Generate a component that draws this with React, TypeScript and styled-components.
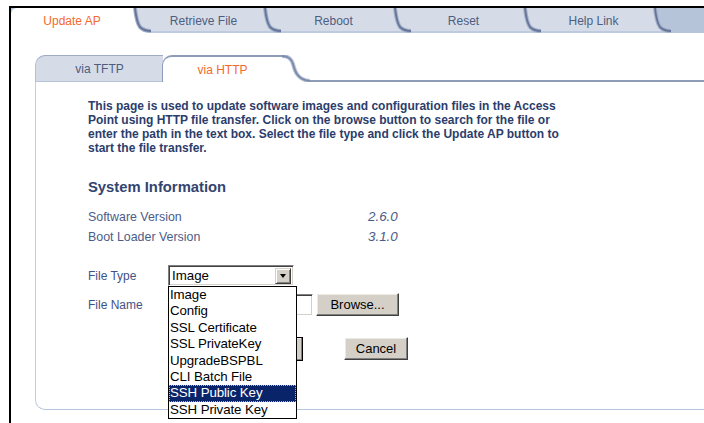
import React from "react";
import styled, { createGlobalStyle } from "styled-components";

const GlobalStyle = createGlobalStyle`
  html, body { margin: 0; padding: 0; background: #fff; }
  body { font-family: "Liberation Sans", Arial, sans-serif; }
`;

const Frame = styled.div`
  margin: 6px 0 0 9px;
  height: 417px;
  box-sizing: border-box;
  border-top: 2px solid #000;
  border-left: 2px solid #000;
  overflow: hidden;
`;

/* ---------- top navigation ---------- */

const TabBar = styled.nav`
  display: flex;
  height: 25px;
  background: #b6c4da;
`;

const Tab = styled.div<{ $active?: boolean; $width: number }>`
  display: flex;
  flex: none;
  width: ${(p) => p.$width}px;
  background: ${(p) => (p.$active ? "#fff" : "#d5dce8")};
  box-shadow: ${(p) => (p.$active ? "none" : "inset 0 -2px 0 #bdcadf")};
  border-top-left-radius: ${(p) => (p.$active ? "6px" : "0")};
`;

const TabLabel = styled.span<{ $active?: boolean; $shift: number }>`
  flex: 1;
  display: flex;
  align-items: center;
  justify-content: center;
  padding-right: ${(p) => p.$shift}px;
  font-size: 12px;
  color: ${(p) => (p.$active ? "#f5692c" : "#4d5d80")};
`;

const CurveSvg = styled.svg`
  flex: none;
  display: block;
`;

const TabCurve = ({ next }: { next: string }) => (
  <CurveSvg width="18" height="25" viewBox="0 0 18 25">
    <path d="M2 0 C3 9 4 15 7 19 C10 22 13 23 18 23 L18 0 Z" fill={next} />
    <path
      d="M2 0 C3 9 4 15 7 19 C10 22 13 23 18 23"
      fill="none"
      stroke="#a3afc7"
      strokeWidth="4"
    />
    <path
      d="M2 0 C3 9 4 15 7 19 C10 22 13 23 18 23"
      fill="none"
      stroke="#65749a"
      strokeWidth="1.8"
    />
  </CurveSvg>
);

/* ---------- sub navigation + panel ---------- */

const Body = styled.div`
  padding: 22px 0 0 24px;
`;

const SubTabs = styled.div`
  display: flex;
  height: 27px;
`;

const SubTab = styled.div<{ $active?: boolean; $width: number }>`
  flex: none;
  width: ${(p) => p.$width}px;
  box-sizing: border-box;
  display: flex;
  align-items: center;
  justify-content: center;
  font-size: 12px;
  color: ${(p) => (p.$active ? "#f5692c" : "#4d5d80")};
  background: ${(p) => (p.$active ? "#fff" : "#d5dce7")};
  border-top: ${(p) => (p.$active ? "2px solid #8f9cb8" : "1px solid #9eabc3")};
  border-left: 1px solid ${(p) => (p.$active ? "#8f9cb8" : "#b3bfd4")};
  border-bottom: ${(p) => (p.$active ? "none" : "1px solid #b8c5db")};
  border-top-left-radius: 10px;
  margin-left: ${(p) => (p.$active ? "-1px" : "0")};
`;

const SubTabRest = styled.div`
  flex: 1;
  box-sizing: border-box;
  border-bottom: 2px solid #8f9cb8;
`;

const SubCurve = () => (
  <CurveSvg width="28" height="27" viewBox="0 0 28 27">
    <path
      d="M0 1 C6 1 9 3 11 9 C13 17 16 25 28 26"
      fill="none"
      stroke="#b6c1d6"
      strokeWidth="4"
    />
    <path
      d="M0 1 C6 1 9 3 11 9 C13 17 16 25 28 26"
      fill="none"
      stroke="#7d8bab"
      strokeWidth="1.8"
    />
  </CurveSvg>
);

const Panel = styled.section`
  height: 328px;
  box-sizing: border-box;
  border-left: 1px solid #c3cde0;
  border-bottom: 1px solid #b9c5da;
  border-bottom-left-radius: 10px;
  padding: 17px 0 0 52px;
`;

const Intro = styled.p`
  margin: 0;
  font-size: 12px;
  font-weight: bold;
  line-height: 14px;
  color: #2c3d6c;
`;

const IntroLine = styled.span`
  display: block;
  white-space: nowrap;
`;

const Heading = styled.h2`
  margin: 23px 0 0;
  font-size: 14.8px;
  line-height: 18px;
  font-weight: bold;
  color: #33456f;
`;

const InfoGrid = styled.dl`
  display: grid;
  grid-template-columns: 280px auto;
  margin: 11px 0 0;
  line-height: 20px;
  color: #4c5c88;
`;

const InfoTerm = styled.dt`
  font-size: 12.4px;
`;

const InfoValue = styled.dd`
  margin: 0;
  font-size: 13.4px;
  font-style: italic;
`;

const FormRow = styled.div<{ $gap: number }>`
  display: flex;
  align-items: center;
  margin-top: ${(p) => p.$gap}px;
`;

const FieldLabel = styled.label`
  flex: none;
  width: 80px;
  font-size: 12px;
  color: #3f5288;
`;

const SelectWrap = styled.div`
  position: relative;
  width: 126px;
  height: 21px;
`;

const SelectBox = styled.div`
  display: flex;
  align-items: center;
  height: 21px;
  box-sizing: border-box;
  border: 1px solid;
  border-color: #808080 #fff #fff #808080;
  box-shadow: inset 1px 1px 0 #404040, inset -1px -1px 0 #d4d0c8;
  background: #fff;
  font-size: 13.3px;
  color: #000;
  padding: 0 2px 0 3px;
`;

const SelectText = styled.span`
  flex: 1;
`;

const ArrowButton = styled.span`
  flex: none;
  display: flex;
  align-items: center;
  justify-content: center;
  width: 16px;
  height: 16px;
  box-sizing: border-box;
  background: #d4d0c8;
  border: 1px solid;
  border-color: #d4d0c8 #404040 #404040 #d4d0c8;
  box-shadow: inset 1px 1px 0 #fff, inset -1px -1px 0 #808080;
`;

const ArrowGlyph = styled.span`
  width: 0;
  height: 0;
  border-left: 3.5px solid transparent;
  border-right: 3.5px solid transparent;
  border-top: 4px solid #000;
`;

const OptionList = styled.ul`
  position: absolute;
  top: 21px;
  left: 0;
  width: 129px;
  margin: 0;
  padding: 0;
  list-style: none;
  box-sizing: border-box;
  border: 1px solid #000;
  background: #fff;
  z-index: 2;
`;

const Option = styled.li<{ $selected?: boolean }>`
  height: 16.4px;
  line-height: 16.4px;
  font-size: 13.3px;
  letter-spacing: -0.1px;
  padding-left: 1px;
  color: ${(p) => (p.$selected ? "#fff" : "#000")};
  background: ${(p) => (p.$selected ? "#0a246a" : "transparent")};
  outline: ${(p) => (p.$selected ? "1px dotted #b8b890" : "none")};
  outline-offset: -1px;
  white-space: nowrap;
`;

const TextInput = styled.div`
  width: 145px;
  height: 22px;
  box-sizing: border-box;
  border: 1px solid;
  border-color: #808080 #fff #fff #808080;
  box-shadow: inset 1px 1px 0 #404040, inset -1px -1px 0 #d4d0c8;
  background: #fff;
`;

const Button = styled.button<{ $width: number; $default?: boolean }>`
  flex: none;
  width: ${(p) => p.$width}px;
  height: ${(p) => (p.$default ? 24 : 23)}px;
  padding: 0;
  font-family: inherit;
  font-size: 13px;
  color: #000;
  background: #d4d0c8;
  border: 1px solid;
  border-color: ${(p) =>
    p.$default ? "#000" : "#fff #404040 #404040 #fff"};
  box-shadow: inset -1px -1px 0 #808080, inset 1px 1px 0 #eceae4;
`;

const BrowseButton = styled(Button)`
  margin-left: 3px;
`;

const ButtonRow = styled.div`
  display: flex;
  align-items: flex-start;
  gap: 41px;
  margin: 21px 0 0 132px;
`;

const tabs = ["Update AP", "Retrieve File", "Reboot", "Reset", "Help Link"];

const fileTypes = [
  "Image",
  "Config",
  "SSL Certificate",
  "SSL PrivateKey",
  "UpgradeBSPBL",
  "CLI Batch File",
  "SSH Public Key",
  "SSH Private Key",
];

const introLines = [
  "This page is used to update software images and configuration files in the Access",
  "Point using HTTP file transfer. Click on the browse button to search for the file or",
  "enter the path in the text box. Select the file type and click the Update AP button to",
  "start the file transfer.",
];

export default function App() {
  return (
    <>
      <GlobalStyle />
      <Frame>
        <TabBar>
          {tabs.map((t, i) => (
            <Tab key={t} $active={i === 0} $width={i === 0 ? 140 : 130}>
              <TabLabel $active={i === 0} $shift={i === 0 ? 0 : 7}>
                {t}
              </TabLabel>
              <TabCurve next={i === tabs.length - 1 ? "#b6c4da" : "#d5dce8"} />
            </Tab>
          ))}
        </TabBar>

        <Body>
          <SubTabs>
            <SubTab $width={128}>via TFTP</SubTab>
            <SubTab $active $width={120}>
              via HTTP
            </SubTab>
            <SubCurve />
            <SubTabRest />
          </SubTabs>

          <Panel>
            <Intro>
              {introLines.map((l) => (
                <IntroLine key={l}>{l}</IntroLine>
              ))}
            </Intro>

            <Heading>System Information</Heading>
            <InfoGrid>
              <InfoTerm>Software Version</InfoTerm>
              <InfoValue>2.6.0</InfoValue>
              <InfoTerm>Boot Loader Version</InfoTerm>
              <InfoValue>3.1.0</InfoValue>
            </InfoGrid>

            <FormRow $gap={18}>
              <FieldLabel>File Type</FieldLabel>
              <SelectWrap>
                <SelectBox>
                  <SelectText>Image</SelectText>
                  <ArrowButton>
                    <ArrowGlyph />
                  </ArrowButton>
                </SelectBox>
                <OptionList>
                  {fileTypes.map((f) => (
                    <Option key={f} $selected={f === "SSH Public Key"}>
                      {f}
                    </Option>
                  ))}
                </OptionList>
              </SelectWrap>
            </FormRow>

            <FormRow $gap={7}>
              <FieldLabel>File Name</FieldLabel>
              <TextInput />
              <BrowseButton $width={83}>Browse...</BrowseButton>
            </FormRow>

            <ButtonRow>
              <Button $width={83} $default>
                Update AP
              </Button>
              <Button $width={64}>Cancel</Button>
            </ButtonRow>
          </Panel>
        </Body>
      </Frame>
    </>
  );
}
